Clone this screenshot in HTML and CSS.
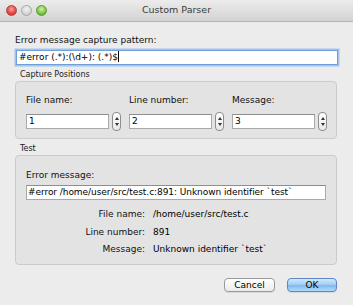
FILE: index.html
```html
<!DOCTYPE html>
<html lang="en">
<head>
    <meta charset="UTF-8">
    <title>Custom Parser</title>
    <link rel="stylesheet" href="styles.css">
</head>
<body>
    <div class="window">
        <div class="titlebar">
            <div class="lights">
                <span class="light red"></span>
                <span class="light gray"></span>
                <span class="light green"></span>
            </div>
            <div class="title">Custom Parser</div>
        </div>

        <div class="content">
            <div class="label pattern-label">Error message capture pattern:</div>
            <div class="field pattern-field">#error (.*):(\d+): (.*)$<span class="caret"></span></div>

            <div class="group-title">Capture Positions</div>
            <div class="group positions">
                <div class="pos">
                    <div class="label">File name:</div>
                    <div class="spin-row">
                        <div class="field num">1</div>
                        <div class="stepper"><span class="up"></span><span class="down"></span></div>
                    </div>
                </div>
                <div class="pos">
                    <div class="label">Line number:</div>
                    <div class="spin-row">
                        <div class="field num">2</div>
                        <div class="stepper"><span class="up"></span><span class="down"></span></div>
                    </div>
                </div>
                <div class="pos">
                    <div class="label">Message:</div>
                    <div class="spin-row">
                        <div class="field num">3</div>
                        <div class="stepper"><span class="up"></span><span class="down"></span></div>
                    </div>
                </div>
            </div>

            <div class="group-title">Test</div>
            <div class="group test">
                <div class="label">Error message:</div>
                <div class="field test-field">#error /home/user/src/test.c:891: Unknown identifier `test`</div>
                <div class="results">
                    <div class="res-label">File name:</div>
                    <div class="res-value">/home/user/src/test.c</div>
                    <div class="res-label">Line number:</div>
                    <div class="res-value">891</div>
                    <div class="res-label">Message:</div>
                    <div class="res-value">Unknown identifier `test`</div>
                </div>
            </div>

            <div class="buttons">
                <button class="btn">Cancel</button>
                <button class="btn default">OK</button>
            </div>
        </div>
    </div>
</body>
</html>
```
FILE: styles.css
```css
html, body {
    margin: 0;
    padding: 0;
}
body {
    width: 353px;
    height: 305px;
    overflow: hidden;
    font-family: "DejaVu Sans", sans-serif;
    font-size: 9px;
    color: #111;
    background: #ececec;
}
.window {
    width: 353px;
    height: 305px;
    background: #ececec;
}
.titlebar {
    height: 21px;
    position: relative;
    background: linear-gradient(#ececec, #d3d3d3);
    border-bottom: 1px solid #b4b4b4;
}
.lights {
    display: flex;
    gap: 4px;
    padding: 5px 0 0 6px;
}
.light {
    width: 11px;
    height: 11px;
    border-radius: 50%;
    box-sizing: border-box;
}
.light.red {
    background: radial-gradient(circle at 50% 35%, #f7a39c, #e0443e 60%, #b32a24);
    border: 1px solid #b7443e;
}
.light.gray {
    background: radial-gradient(circle at 50% 35%, #f4f4f4, #d6d6d6 60%, #bdbdbd);
    border: 1px solid #a8a8a8;
}
.light.green {
    background: radial-gradient(circle at 50% 35%, #cdf2a6, #7cc248 60%, #4f9a26);
    border: 1px solid #5c9b34;
}
.title {
    position: absolute;
    left: 0;
    right: 0;
    top: 4px;
    text-align: center;
    font-size: 9.5px;
    color: #3c3c3c;
}
.content {
    padding: 12px 16px 0 15px;
}
.label {
    line-height: 12px;
    color: #111;
}
.field {
    background: #fff;
    border: 1px solid #a9a9a9;
    border-top-color: #8e8e8e;
    box-sizing: border-box;
    height: 15px;
    line-height: 13px;
    padding: 0 2px;
    white-space: nowrap;
    overflow: hidden;
    color: #000;
}
.pattern-field {
    margin: 4px 0 0 1px;
    width: 322px;
    border-color: #6f9fd8;
    box-shadow: 0 0 0 1.5px #a2c3ec;
}
.caret {
    display: inline-block;
    width: 1px;
    height: 11px;
    background: #000;
    vertical-align: -2px;
}
.group-title {
    font-size: 8px;
    line-height: 10px;
    margin: 5px 0 1px 5px;
    color: #1a1a1a;
}
.group {
    background: #e3e3e3;
    border: 1px solid #cbcbcb;
    border-radius: 4px;
    box-sizing: border-box;
}
.positions {
    height: 58px;
    display: grid;
    grid-template-columns: 103px 103px 103px;
    padding: 12px 0 0 10px;
}
.spin-row {
    display: flex;
    align-items: center;
    margin-top: 6px;
}
.num {
    width: 83px;
}
.stepper {
    width: 9px;
    height: 19px;
    margin-left: 3px;
    box-sizing: border-box;
    border: 1px solid #8d8d8d;
    border-radius: 4px;
    background: linear-gradient(#ffffff, #e9e9e9);
    display: flex;
    flex-direction: column;
    align-items: center;
    justify-content: center;
    gap: 3px;
}
.stepper .up {
    width: 0;
    height: 0;
    border-left: 2px solid transparent;
    border-right: 2px solid transparent;
    border-bottom: 3px solid #333;
}
.stepper .down {
    width: 0;
    height: 0;
    border-left: 2px solid transparent;
    border-right: 2px solid transparent;
    border-top: 3px solid #333;
}
.test {
    height: 110px;
    padding: 13px 0 0 10px;
}
.test-field {
    margin-top: 4px;
    width: 300px;
    padding: 0 1px;
    letter-spacing: -0.06px;
}
.results {
    display: grid;
    grid-template-columns: 119px auto;
    column-gap: 8px;
    margin-top: 6px;
    line-height: 17.5px;
}
.res-label {
    text-align: right;
    color: #111;
}
.res-value {
    color: #000;
}
.buttons {
    display: flex;
    justify-content: flex-end;
    gap: 12px;
    margin-top: 13px;
}
.btn {
    font-family: "DejaVu Sans", sans-serif;
    font-size: 9px;
    color: #000;
    height: 14px;
    line-height: 12px;
    padding: 0;
    width: 51px;
    border: 1px solid #9a9a9a;
    border-radius: 4px;
    background: linear-gradient(#ffffff, #ececec);
    box-shadow: 0 1px 0 rgba(0, 0, 0, 0.08);
}
.btn.default {
    width: 50px;
    border-color: #5b87c2;
    background: linear-gradient(#d3e9fc, #9ccbf6 50%, #7db8f1 51%, #b0daf9);
}
```
